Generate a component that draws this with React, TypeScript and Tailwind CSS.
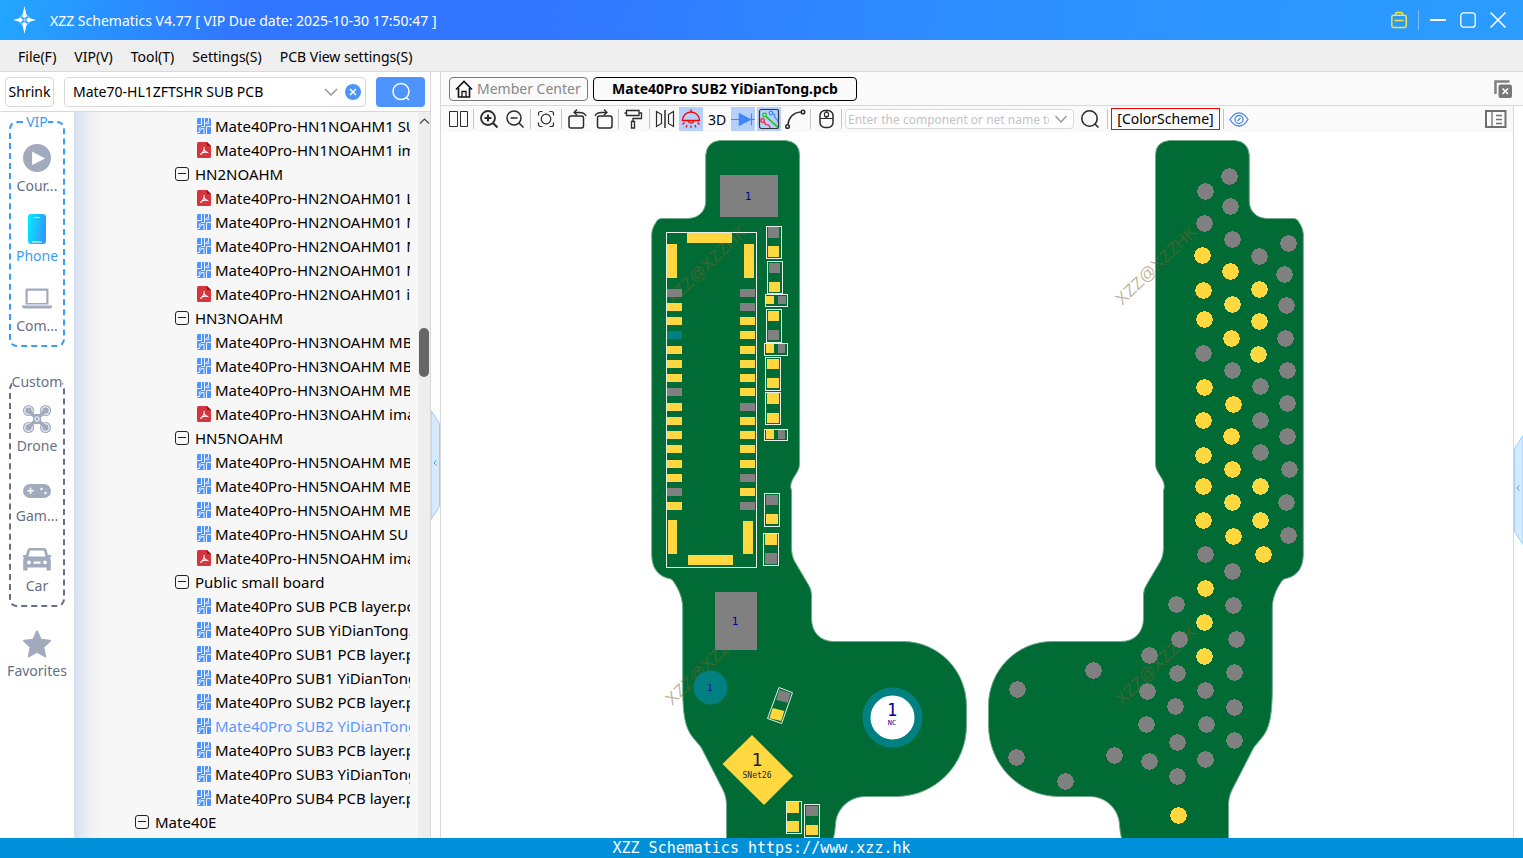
import { useState } from 'react';
import type { ReactNode } from 'react';

type NodeKind = 'pcb' | 'pdf' | 'folder' | 'root';
type TreeNode = { kind: NodeKind; name: string };

const tree: TreeNode[] = [
  { kind: 'pcb', name: 'Mate40Pro-HN1NOAHM1 SU' },
  { kind: 'pdf', name: 'Mate40Pro-HN1NOAHM1 im' },
  { kind: 'folder', name: 'HN2NOAHM' },
  { kind: 'pdf', name: 'Mate40Pro-HN2NOAHM01 L' },
  { kind: 'pcb', name: 'Mate40Pro-HN2NOAHM01 M' },
  { kind: 'pcb', name: 'Mate40Pro-HN2NOAHM01 M' },
  { kind: 'pcb', name: 'Mate40Pro-HN2NOAHM01 M' },
  { kind: 'pdf', name: 'Mate40Pro-HN2NOAHM01 i' },
  { kind: 'folder', name: 'HN3NOAHM' },
  { kind: 'pcb', name: 'Mate40Pro-HN3NOAHM MB' },
  { kind: 'pcb', name: 'Mate40Pro-HN3NOAHM MB' },
  { kind: 'pcb', name: 'Mate40Pro-HN3NOAHM MB' },
  { kind: 'pdf', name: 'Mate40Pro-HN3NOAHM ima' },
  { kind: 'folder', name: 'HN5NOAHM' },
  { kind: 'pcb', name: 'Mate40Pro-HN5NOAHM MB' },
  { kind: 'pcb', name: 'Mate40Pro-HN5NOAHM MB' },
  { kind: 'pcb', name: 'Mate40Pro-HN5NOAHM MB' },
  { kind: 'pcb', name: 'Mate40Pro-HN5NOAHM SU' },
  { kind: 'pdf', name: 'Mate40Pro-HN5NOAHM ima' },
  { kind: 'folder', name: 'Public small board' },
  { kind: 'pcb', name: 'Mate40Pro SUB PCB layer.pc' },
  { kind: 'pcb', name: 'Mate40Pro SUB YiDianTong.' },
  { kind: 'pcb', name: 'Mate40Pro SUB1 PCB layer.p' },
  { kind: 'pcb', name: 'Mate40Pro SUB1 YiDianTong' },
  { kind: 'pcb', name: 'Mate40Pro SUB2 PCB layer.p' },
  { kind: 'pcb', name: 'Mate40Pro SUB2 YiDianTong' },
  { kind: 'pcb', name: 'Mate40Pro SUB3 PCB layer.p' },
  { kind: 'pcb', name: 'Mate40Pro SUB3 YiDianTong' },
  { kind: 'pcb', name: 'Mate40Pro SUB4 PCB layer.p' },
  { kind: 'root', name: 'Mate40E' },
];

const indent: Record<NodeKind, string> = {
  pcb: 'pl-[123px] gap-1',
  pdf: 'pl-[123px] gap-1',
  folder: 'pl-[101px] gap-1.5',
  root: 'pl-[61px] gap-1.5',
};

function PcbFileIcon() {
  return (
    <svg width="14" height="16" viewBox="0 0 14 16" className="shrink-0">
      <rect width="14" height="16" rx="1.5" fill="#4d94ff" />
      <g fill="none" stroke="#fff" strokeWidth="0.9">
        <path d="M4.500 0v6.500H0M7.500 0v8.500h-3M7.500 5.500h1.800M11.500 0v3.200M14 8.500H9.500v7.500M7 16v-5.500H4.800M0 14.500h2.500v-1.500" />
        <circle cx="10.800" cy="4.800" r="1.200" />
        <circle cx="3.200" cy="11" r="1.200" />
      </g>
    </svg>
  );
}

function PdfFileIcon() {
  return (
    <svg width="14" height="16" viewBox="0 0 14 16" className="shrink-0">
      <path d="M1.500 0H10l4 4v10.500a1.500 1.500 0 0 1-1.500 1.500h-11A1.500 1.500 0 0 1 0 14.500v-13A1.500 1.500 0 0 1 1.500 0z" fill="#d3363f" />
      <path d="M10 0l4 4h-3a1 1 0 0 1-1-1z" fill="#8f1219" />
      <path d="M7 5.500c.6 2.500-1 4.800-3.300 7M7 7.500c.8 2 2 3 4 3.300M4.800 11c1.800-.9 3.500-1.100 5.500-.8" fill="none" stroke="#fff" strokeWidth="1.100" strokeLinecap="round" />
    </svg>
  );
}

function CollapseIcon() {
  return (
    <svg width="14" height="14" viewBox="0 0 14 14" fill="none" stroke="#222" strokeWidth="1" className="shrink-0">
      <rect x="0.500" y="0.500" width="13" height="13" rx="2.500" />
      <path d="M3 6.500h8" />
    </svg>
  );
}

function Category({ label, active, children }: { label: string; active?: boolean; children: ReactNode }) {
  return (
    <button
      type="button"
      className={
        active
          ? 'flex h-[70px] w-full flex-col items-center gap-1 whitespace-nowrap pt-3 text-[14px] leading-5 text-[#3b9cf2]'
          : 'flex h-[70px] w-full flex-col items-center gap-1 whitespace-nowrap pt-3 text-[14px] leading-5 text-[#667085]'
      }
    >
      <svg width="32" height="28" viewBox="-2 0 32 28" fill="#a2aabd" className="shrink-0 overflow-visible">
        {children}
      </svg>
      {label}
    </button>
  );
}

function Sidebar() {
  return (
    <nav className="flex w-[74px] shrink-0 flex-col items-center bg-white">
      <fieldset className="w-14 rounded-lg border-2 border-dashed border-[#3b9cf2] pb-[3px]">
        <legend className="mx-auto text-[14px] leading-5 text-[#3b9cf2]">VIP</legend>
        <div className="-mx-1">
          <Category label="Cour...">
            <circle cx="14" cy="14" r="14" />
            <path d="M9.500 8.200v12.300l11.800-6.100z" fill="#fff" stroke="#fff" strokeWidth="0.800" strokeLinejoin="round" />
          </Category>
          <Category label="Phone" active>
            <defs>
              <linearGradient id="phoneFill" x1="0" y1="0" x2="1" y2="0.300">
                <stop offset="0" stopColor="#00efff" />
                <stop offset="1" stopColor="#2f9bff" />
              </linearGradient>
            </defs>
            <rect x="5" y="0" width="18" height="30" rx="3" fill="url(#phoneFill)" />
            <path d="M12 3.500h4M9.500 28h9" stroke="#fff" strokeWidth="1.200" strokeLinecap="round" />
          </Category>
          <Category label="Com...">
            <path d="M3.500 4.500h21a1 1 0 0 1 1 1v15h-23v-15a1 1 0 0 1 1-1zM4.700 6.700v12.300h18.600V6.700z" fillRule="evenodd" />
            <path d="M-1 21.500h30v1a2 2 0 0 1-2 2H1a2 2 0 0 1-2-2z" />
          </Category>
        </div>
      </fieldset>
      <fieldset className="mt-[25px] w-14 rounded-lg border-2 border-dashed border-[#667085] pb-[3px]">
        <legend className="mx-auto text-[14px] leading-5 whitespace-nowrap text-[#667085]">Custom</legend>
        <div className="-mx-1">
          <Category label="Drone">
            <g fill="none" stroke="#a2aabd">
              <path d="M6 7l16 16M22 7L6 23" strokeWidth="3.500" />
              <circle cx="5.500" cy="6.500" r="4.900" strokeWidth="1.300" />
              <circle cx="22.500" cy="6.500" r="4.900" strokeWidth="1.300" />
              <circle cx="5.500" cy="23.500" r="4.900" strokeWidth="1.300" />
              <circle cx="22.500" cy="23.500" r="4.900" strokeWidth="1.300" />
            </g>
            <circle cx="5.500" cy="6.500" r="3.200" />
            <circle cx="22.500" cy="6.500" r="3.200" />
            <circle cx="5.500" cy="23.500" r="3.200" />
            <circle cx="22.500" cy="23.500" r="3.200" />
            <rect x="10" y="10" width="8" height="10" rx="2.500" />
            <circle cx="14" cy="15" r="2.200" fill="none" stroke="#fff" />
          </Category>
          <Category label="Gam...">
            <rect x="0" y="10" width="28" height="14" rx="7" />
            <path d="M7.500 13.500v6.500M4.300 16.750h6.400" stroke="#fff" strokeWidth="1.500" />
            <circle cx="18.500" cy="15" r="1.200" fill="#fff" />
            <circle cx="22.500" cy="19" r="1.200" fill="#fff" />
          </Category>
          <Category label="Car">
            <path
              transform="translate(0 1.500)"
              d="M7.500 2.500h13c1.800 0 2.700.8 3.200 2.300L25 9.500h3v2.300h-1.500c.9.900 1.300 1.800 1.300 3.200v10h-4.300v-3h-19v3H.2V15c0-1.400.4-2.300 1.300-3.200H0V9.500h3l1.300-4.700c.5-1.500 1.400-2.300 3.200-2.300zM8 5c-.7 0-1 .2-1.200.9L5.500 11h17l-1.300-5.100C21 5.200 20.700 5 20 5zM6 15a1.900 1.900 0 1 0 0 3.800 1.900 1.900 0 0 0 0-3.800zM22 15a1.900 1.900 0 1 0 0 3.800 1.900 1.900 0 0 0 0-3.800zM10.500 16v2.300h7V16z"
              fillRule="evenodd"
            />
          </Category>
        </div>
      </fieldset>
      <div className="mt-2.5 w-full">
        <Category label="Favorites">
          <path
            d="M14 2.500l3.800 8.300 9.200 1-6.700 6.300 1.900 9.400L14 22.700l-8.200 4.800 1.900-9.400L1 11.800l9.200-1z"
            stroke="#a2aabd"
            strokeWidth="2"
            strokeLinejoin="round"
          />
        </Category>
      </div>
    </nav>
  );
}

function FileTree() {
  const [selected, setSelected] = useState(25);
  return (
    <div className="flex min-w-0 flex-1 bg-[#f7f7f7] bg-[linear-gradient(to_right,#d6e0f1,#eef1f4_16px,#f7f7f7_32px)]">
      <ul className="mr-2 min-w-0 flex-1 overflow-hidden pt-0.5">
        {tree.map((node, index) => (
          <li key={index}>
            <button
              type="button"
              onClick={() => setSelected(index)}
              className={`flex h-6 w-full items-center overflow-hidden text-left text-[15px] leading-6 whitespace-nowrap ${indent[node.kind]} ${index === selected ? 'text-[#5b97ff]' : 'text-black'}`}
            >
              {node.kind === 'pcb' ? <PcbFileIcon /> : node.kind === 'pdf' ? <PdfFileIcon /> : <CollapseIcon />}
              <span className="min-w-0 overflow-hidden">{node.name}</span>
            </button>
          </li>
        ))}
      </ul>
      <div className="flex w-3 shrink-0 flex-col items-center bg-[#eeeeee]">
        <svg width="12" height="16" viewBox="0 0 12 16" fill="none" stroke="#444" strokeWidth="1.200">
          <path d="M2 11.500l4.500-4.500 4.500 4.500" />
        </svg>
        <div className="mt-[200px] h-[49px] w-2.5 rounded-full bg-[#666666]" />
      </div>
    </div>
  );
}

function SidePanel() {
  return (
    <section className="flex w-[431px] shrink-0 flex-col border-r border-[#d9d9d9] bg-white">
      <div className="flex h-10 shrink-0 items-center border-b border-[#d9d9d9] pl-[5px]">
        <button type="button" className="h-[30px] w-[49px] rounded border border-[#d9d9d9] bg-white text-[14px] text-black">
          Shrink
        </button>
        <div className="ml-2.5 flex h-[30px] w-[302px] items-center rounded border border-[#d9d9d9] bg-white">
          <input
            type="text"
            aria-label="Search boards"
            defaultValue="Mate70-HL1ZFTSHR SUB PCB"
            className="h-full min-w-0 flex-1 bg-transparent pl-2 text-[14px] text-black outline-none"
          />
          <button type="button" aria-label="Show history" className="flex w-6 justify-center">
            <svg width="14" height="8" viewBox="0 0 14 8" fill="none" stroke="#9a9a9a" strokeWidth="1.500">
              <path d="M1 1l6 6 6-6" />
            </svg>
          </button>
          <button type="button" aria-label="Clear" className="mr-0.5 flex w-5 justify-center">
            <svg width="16" height="16" viewBox="0 0 16 16">
              <circle cx="8" cy="8" r="8" fill="#4d94f5" />
              <path d="M5 5l6 6M11 5l-6 6" stroke="#fff" strokeWidth="1.500" />
            </svg>
          </button>
        </div>
        <button type="button" aria-label="Search" className="ml-2.5 flex h-[30px] w-[49px] items-center justify-center rounded bg-[#4d94ff]">
          <svg width="20" height="20" viewBox="0 0 20 20" fill="none" stroke="#fff" strokeWidth="1.500">
            <circle cx="10" cy="9.500" r="8" />
            <path d="M15.500 15.500l2.500 2.500" />
          </svg>
        </button>
      </div>
      <div className="flex min-h-0 flex-1">
        <Sidebar />
        <FileTree />
      </div>
    </section>
  );
}

function TitleBar() {
  return (
    <header className="flex h-10 shrink-0 items-center bg-[linear-gradient(100deg,#22a7ff_0%,#3176ff_16%,#3176ff_36%,#2e8dff_62%,#2a9dff_100%)] pl-3 pr-2.5">
      <svg width="26" height="32" viewBox="0 0 26 32" className="shrink-0">
        <circle cx="12.500" cy="16" r="5" fill="none" stroke="#7cc4ff" strokeWidth="1.500" />
        <path d="M12.500 2l2.300 10.500-2.300 2-2.300-2zM12.500 30l2.300-10.500-2.300-2-2.300 2zM1 16l8-2.300L11 16l-2 2.300zM24 16l-8-2.300L14 16l2 2.300z" fill="#fff" />
        <path d="M12.500 13v6M9.500 16h6" stroke="#9dd0ff" strokeWidth="1" />
      </svg>
      <h1 className="ml-3 flex-1 text-[14px] whitespace-nowrap text-white">XZZ Schematics V4.77 [ VIP Due date: 2025-10-30 17:50:47 ]</h1>
      <button type="button" aria-label="License" className="flex size-[30px] items-center justify-center">
        <svg width="16" height="18" viewBox="0 0 16 18" fill="none" stroke="#f2e53a" strokeWidth="1.500">
          <rect x="0.800" y="4.200" width="14.400" height="12.300" rx="2" />
          <path d="M4.500 4V3a1.500 1.500 0 0 1 1.500-1.500h4A1.500 1.500 0 0 1 11.500 3v1M3.500 9.500h9" />
        </svg>
      </button>
      <div className="mx-1 h-5 w-px bg-[#77bdff]" />
      <button type="button" aria-label="Minimize" className="flex size-[30px] items-center justify-center">
        <svg width="16" height="16" viewBox="0 0 16 16" stroke="#fff" strokeWidth="2">
          <path d="M0 8h16" />
        </svg>
      </button>
      <button type="button" aria-label="Maximize" className="flex size-[30px] items-center justify-center">
        <svg width="16" height="16" viewBox="0 0 16 16" fill="none" stroke="#fff" strokeWidth="1.300">
          <rect x="0.800" y="0.800" width="14.400" height="14.400" rx="3" />
        </svg>
      </button>
      <button type="button" aria-label="Close" className="flex size-[30px] items-center justify-center">
        <svg width="16" height="16" viewBox="0 0 16 16" stroke="#fff" strokeWidth="1.500">
          <path d="M0.500 0.500l15 15M15.500 0.500l-15 15" />
        </svg>
      </button>
    </header>
  );
}

const menus = ['File(F)', 'VIP(V)', 'Tool(T)', 'Settings(S)', 'PCB View settings(S)'];

function Tool({ label, active, children }: { label: string; active?: boolean; children: ReactNode }) {
  return (
    <button
      type="button"
      aria-label={label}
      className={active ? 'flex size-6 shrink-0 items-center justify-center bg-[#b5d0fb]' : 'flex size-6 shrink-0 items-center justify-center'}
    >
      <svg width="24" height="24" viewBox="0 0 24 24" fill="none" stroke="#2b2b2b" strokeWidth="1.500">
        {children}
      </svg>
    </button>
  );
}

function Separator() {
  return <div className="mx-px h-5 w-px shrink-0 bg-[#c4c4c4]" />;
}

function Toolbar() {
  return (
    <div className="flex h-[26px] shrink-0 items-center gap-0.5 bg-[#fafafa] pl-[5px] pr-1.5">
      <Tool label="Split view">
        <path d="M3.500 4.500h8v15h-8zM14.500 4.500h7v15h-7z" strokeWidth="1" />
      </Tool>
      <Separator />
      <Tool label="Zoom in">
        <circle cx="11" cy="11" r="7" strokeWidth="1.800" />
        <path d="M16 16l4.500 4.500M7.500 11h7M11 7.500v7" strokeWidth="2" />
      </Tool>
      <Tool label="Zoom out">
        <circle cx="11" cy="11" r="7" />
        <path d="M16 16l4.500 4.500M7.500 11h7" />
      </Tool>
      <Separator />
      <Tool label="Fit to window">
        <circle cx="12" cy="12" r="4.800" strokeWidth="1.200" />
        <path d="M4.500 8.500v-2a2 2 0 0 1 2-2h2M15.500 4.500h2a2 2 0 0 1 2 2v2M19.500 15.500v2a2 2 0 0 1-2 2h-2M8.500 19.500h-2a2 2 0 0 1-2-2v-2" strokeWidth="1.200" />
      </Tool>
      <Separator />
      <Tool label="Rotate left">
        <rect x="4" y="9" width="14.500" height="12" rx="2" />
        <path d="M9 5.500h5.500c3 0 5.500 1 6.500 3.500M12 2.500l-3 3 3 2.500" strokeWidth="1.300" />
      </Tool>
      <Tool label="Rotate right">
        <rect x="6.500" y="9" width="14.500" height="12" rx="2" />
        <path d="M16 5.500h-5.500c-3 0-5.500 1-6.500 3.500M13 2.500l3 3-3 2.500" strokeWidth="1.300" />
      </Tool>
      <Separator />
      <Tool label="Color painter">
        <path d="M4.500 3.500h12.500v5H4.500zM17 6h2.500v5.500h-8.500v3M4.500 6h-2M9.500 14.500h3v6.500h-3z" strokeWidth="1.300" />
      </Tool>
      <Separator />
      <Tool label="Mirror">
        <path d="M12 3v18" />
        <path d="M3.500 4.500l5 3v9l-5 3zM20.500 4.500l-5 3v9l5 3z" strokeWidth="1.200" />
      </Tool>
      <Tool label="Highlight" active>
        <g stroke="#f00" strokeWidth="1.400">
          <path d="M3.500 13.500a8.500 8.500 0 0 1 17 0zM12 5V2.500" />
          <path d="M9 14a3.200 3.200 0 0 0 6 0M5.500 15.500l-2 2M8 18l-1 2.500M12 18.500V21M16 18l1 2.500M18.500 15.500l2 2" strokeWidth="1.200" />
        </g>
      </Tool>
      <button type="button" className="w-6 shrink-0 text-center text-[14px] text-black">
        3D
      </button>
      <Tool label="Diode values" active>
        <g stroke="#4086ff">
          <path d="M0 12.500h24M20.500 6.500v12" strokeWidth="1.200" />
          <path d="M8.500 7v11l10.500-5.500z" fill="#4086ff" />
        </g>
      </Tool>
      <Tool label="Net lines" active>
        <g strokeWidth="1.200">
          <rect x="2.500" y="2.500" width="19" height="19" rx="2" stroke="#333" />
          <path d="M9 9.500l12 11" stroke="#18c018" strokeWidth="1.600" />
          <circle cx="7.500" cy="8" r="1.800" stroke="#18c018" />
          <circle cx="14" cy="6" r="1.800" stroke="#4086ff" />
          <path d="M15.800 6.500c3 0 1 3 2.500 4.500s2.500 1 2.500 4" stroke="#4086ff" />
          <circle cx="5.500" cy="13.500" r="1.800" stroke="#f02020" />
          <path d="M7 14.500l1.500 3 3 .5 2 3" stroke="#f02020" />
        </g>
      </Tool>
      <Tool label="Connections">
        <circle cx="20" cy="5" r="1.800" />
        <circle cx="4.500" cy="19.500" r="1.800" />
        <path d="M5 17.500C5.500 11 10 5.500 18 5" />
      </Tool>
      <Separator />
      <Tool label="Mouse mode">
        <rect x="6" y="3.500" width="13" height="17" rx="5" />
        <path d="M6 11.500h13M12.500 3.500V6M12.500 9v2" strokeWidth="1.200" />
        <rect x="10.500" y="5" width="4" height="5" rx="2" strokeWidth="1.200" />
      </Tool>
      <Separator />
      <div className="flex h-5 w-[229px] shrink-0 items-center rounded border border-[#d9d9d9] bg-white">
        <input
          type="text"
          aria-label="Component or net name"
          placeholder="Enter the component or net name to"
          className="h-full min-w-0 flex-1 bg-transparent pl-0.5 text-[12px] text-black outline-none placeholder:text-[#bfc3ca]"
        />
        <button type="button" aria-label="Show recent names" className="flex w-6 shrink-0 justify-center">
          <svg width="12" height="8" viewBox="0 0 12 8" fill="none" stroke="#999" strokeWidth="1.500">
            <path d="M0.500 1l5.500 6 5.500-6" />
          </svg>
        </button>
      </div>
      <button type="button" aria-label="Find" className="flex h-6 w-7 shrink-0 items-center justify-center">
        <svg width="20" height="20" viewBox="0 0 20 20" fill="none" stroke="#2b2b2b" strokeWidth="1.600">
          <circle cx="9.500" cy="9.500" r="7.700" />
          <path d="M15 15l3.500 3.500" />
        </svg>
      </button>
      <Separator />
      <button type="button" className="h-[22px] w-[109px] shrink-0 border border-[#f00] text-center text-[14px] leading-5 text-black">
        [ColorScheme]
      </button>
      <Separator />
      <Tool label="Visibility">
        <g stroke="#4a86e8" strokeWidth="1.300">
          <path d="M3 12.500C6 7.500 9 5.800 12 5.800s6 1.700 9 6.700c-3 5-6 6.500-9 6.500s-6-1.500-9-6.500z" />
          <circle cx="12" cy="12.500" r="4" />
          <path d="M10.500 14l3-3" />
        </g>
      </Tool>
      <div className="flex-1" />
      <Tool label="Side list">
        <g stroke="#6f6f6f">
          <path d="M3 4h19.500v16H3z" strokeWidth="2" />
          <path d="M9 4v16M13 8.500h6M13 12.500h6M13 16.500h6" strokeWidth="1.300" />
        </g>
      </Tool>
    </div>
  );
}

const GREEN = '#006b35';
const GOLD = '#ffd83f';
const GRAY = '#808080';
const TEAL = '#008080';

const boardOutline =
  'M720 140.500H785.500Q799.500 142 799.500 155V464C799.500 473 790.500 478 790.700 487L791.500 491V548C792 556 793 558 795 562L808 584Q811.500 589 811.500 595V618C811.500 632 820 641.500 834 641.500H903C938 641.500 966.500 670 966.500 706V725C966.500 765 935 796.500 896 796.500H866C848 796.500 836 810 835.500 825Q835 833 833 840H726.500V804C726 797 725 794 722 788L702 749C700 745 697 743 695 740C686 730 683 719 682.700 690V608C682.500 598 679 590 675 584C672 578 670 579 667 578C657 575 652 567 651.700 555V234C652 228 655 224 657.500 220Q659 218.500 662 218.500H688C699 218 705.700 211 705.700 201V155Q707 141.500 720 140.500Z';

type Pad = [x: number, y: number, w: number, h: number, fill: string];

const pinRows: [y: number, left: string, right: string][] = [
  [289, GRAY, GRAY],
  [303, GOLD, GRAY],
  [317, GOLD, GOLD],
  [331, TEAL, GOLD],
  [346, GOLD, GOLD],
  [360, GOLD, GOLD],
  [374, GOLD, GOLD],
  [388, GRAY, GOLD],
  [403, GOLD, GRAY],
  [417, GOLD, GOLD],
  [431, GOLD, GOLD],
  [445, GOLD, GOLD],
  [460, GOLD, GOLD],
  [474, GOLD, GRAY],
  [488, GRAY, GOLD],
  [502, GOLD, GRAY],
];

const pads: Pad[] = [
  [720, 175, 58, 42, GRAY],
  [715, 592, 42, 58, GRAY],
  [687, 233, 45, 10, GOLD],
  [667, 244, 10, 34, GOLD],
  [744, 244, 10, 34, GOLD],
  [668, 520, 9, 34, GOLD],
  [743, 521, 10, 33, GOLD],
  [688, 555, 45, 10, GOLD],
  [768, 227, 11, 11, GRAY],
  [768, 246, 11, 11, GOLD],
  [769, 263, 11, 10, GRAY],
  [769, 282, 11, 10, GOLD],
  [766, 296, 8, 8, GOLD],
  [778, 296, 8, 8, GRAY],
  [768, 311, 11, 10, GOLD],
  [768, 330, 11, 10, GRAY],
  [766, 344, 8, 9, GOLD],
  [778, 344, 7, 9, GRAY],
  [767, 359, 12, 10, GOLD],
  [767, 378, 12, 10, GOLD],
  [767, 393, 12, 11, GOLD],
  [767, 413, 12, 10, GOLD],
  [766, 430, 8, 9, GOLD],
  [778, 430, 7, 9, GRAY],
  [766, 495, 12, 10, GRAY],
  [766, 514, 12, 10, GOLD],
  [765, 534, 12, 11, GOLD],
  [765, 553, 12, 11, GRAY],
  [787, 802, 12, 11, GOLD],
  [787, 821, 12, 11, GOLD],
  [806, 806, 12, 10, GRAY],
  [806, 825, 12, 10, GOLD],
];

const outlines: [x: number, y: number, w: number, h: number][] = [
  [666, 232, 90, 335],
  [766, 226, 15, 32],
  [767, 261, 15, 32],
  [765, 294, 22, 12],
  [766, 309, 15, 33],
  [764, 343, 23, 12],
  [765, 357, 15, 33],
  [765, 392, 15, 32],
  [764, 429, 23, 11],
  [764, 493, 15, 33],
  [763, 533, 15, 32],
  [786, 801, 15, 32],
  [804, 804, 15, 33],
];

const grayDots: [number, number][] = [
  [1229, 176], [1205, 191], [1230, 206], [1204, 223], [1232, 239], [1288, 243], [1259, 256], [1284, 274],
  [1286, 305], [1285, 338], [1203, 353], [1232, 370], [1287, 370], [1260, 386], [1287, 403], [1260, 420],
  [1287, 436], [1260, 452], [1289, 469], [1286, 502], [1288, 535], [1205, 554], [1232, 571], [1176, 604],
  [1233, 605], [1179, 639], [1236, 639], [1149, 655], [1093, 670], [1017, 689], [1177, 673], [1234, 672],
  [1147, 691], [1205, 690], [1175, 706], [1234, 707], [1146, 724], [1206, 724], [1177, 742], [1234, 740],
  [1016, 757], [1114, 755], [1149, 761], [1205, 759], [1177, 776], [1065, 781],
];

const goldDots: [number, number][] = [
  [1202, 255], [1230, 271], [1203, 290], [1259, 289], [1232, 304], [1204, 319], [1259, 321], [1231, 338],
  [1258, 354], [1204, 387], [1233, 404], [1203, 420], [1231, 436], [1203, 455], [1232, 469], [1203, 486],
  [1260, 486], [1232, 502], [1203, 520], [1260, 520], [1233, 536], [1263, 554], [1205, 588], [1204, 622],
  [1204, 656], [1178, 815],
];

const watermarks: [number, number][] = [
  [672, 306],
  [1122, 306],
  [672, 706],
  [1122, 706],
];

function BoardView() {
  return (
    <svg
      viewBox="441 132 1072 706"
      preserveAspectRatio="xMidYMid slice"
      className="h-full w-full bg-white font-['DejaVu_Sans_Mono',monospace]"
      role="img"
      aria-label="Board layout"
    >
      <g fill={GREEN} stroke="#6fa98a" strokeWidth="1">
        <path d={boardOutline} />
        <path d={boardOutline} transform="translate(1955 0) scale(-1 1)" />
      </g>
      <g fill="#80602a" fillOpacity="0.480" fontFamily="Liberation Sans" fontSize="17">
        {watermarks.map(([x, y]) => (
          <text key={`${x}-${y}`} transform={`translate(${x} ${y}) rotate(-44)`}>
            XZZ@XZZHK
          </text>
        ))}
      </g>
      <g shapeRendering="crispEdges">
        {pinRows.map(([y, left, right]) => (
          <g key={y}>
            <rect x="667" y={y} width="15" height="8" fill={left} />
            <rect x="740" y={y} width="15" height="8" fill={right} />
          </g>
        ))}
        {pads.map(([x, y, w, h, fill]) => (
          <rect key={`${x}-${y}`} x={x} y={y} width={w} height={h} fill={fill} />
        ))}
      </g>
      <g fill="none" stroke="#e6efe9" transform="translate(0.5 0.5)">
        {outlines.map(([x, y, w, h]) => (
          <rect key={`${x}-${y}`} x={x} y={y} width={w} height={h} />
        ))}
      </g>
      <path d="M779.300 690l11.400 3.300-3 9.400-11.400-2.700z" fill={GRAY} />
      <path d="M772.700 708l11.600 3-3 10-12-2.700z" fill={GOLD} />
      <path d="M779 687.500l13.500 5.200-10.800 30.800-14.200-5z" fill="none" stroke="#e6efe9" />
      <circle cx="710.500" cy="687.500" r="17" fill={TEAL} />
      <circle cx="892.500" cy="717.500" r="26" fill="#fff" stroke={TEAL} strokeWidth="8" />
      <path d="M752 735l41 41-29 29-41.500-41z" fill={GOLD} />
      <g transform="translate(0.5 0.5)" shapeRendering="crispEdges">
        <g fill={GRAY}>
          {grayDots.map(([x, y]) => (
            <circle key={`${x}-${y}`} cx={x} cy={y} r="8.300" />
          ))}
        </g>
        <g fill={GOLD}>
          {goldDots.map(([x, y]) => (
            <circle key={`${x}-${y}`} cx={x} cy={y} r="8.300" />
          ))}
        </g>
      </g>
      <g fill="#00009c" textAnchor="middle">
        <text x="748" y="200" fontSize="11">1</text>
        <text x="735" y="625" fontSize="11">1</text>
        <text x="710" y="691" fontSize="8">1</text>
        <text x="892" y="716" fontSize="17">1</text>
        <text x="892" y="725" fontSize="7">NC</text>
        <text x="757" y="766" fontSize="18" fill="#1a1a4d">1</text>
        <text x="757" y="778" fontSize="8" fill="#1a1a4d">SNet26</text>
      </g>
    </svg>
  );
}

function Handle({ side }: { side: 'left' | 'right' }) {
  return (
    <button type="button" aria-label={side === 'left' ? 'Collapse file panel' : 'Expand side list'} className="block w-full">
      <svg viewBox="0 0 9 110" className="block w-full">
        {side === 'left' ? (
          <path d="M0 0.500l8.500 13v83L0 109.500z" fill="#d6eaff" stroke="#9ccdfa" />
        ) : (
          <path d="M9 0.500l-8.500 13v83l8.500 13z" fill="#d6eaff" stroke="#9ccdfa" />
        )}
        <path d="M5.500 50.500L3 53l2.500 2.500" fill="none" stroke="#3b9cf2" />
      </svg>
    </button>
  );
}

function Workspace() {
  return (
    <main className="flex min-w-0 flex-1 flex-col border-l border-[#d9d9d9] bg-[#fafafa]">
      <div className="flex h-[34px] shrink-0 items-center border-b border-[#d9d9d9] pl-2 pr-2.5">
        <button type="button" className="flex h-6 w-[139px] items-center gap-1 rounded border border-[#7a7a7a] pl-[5px] text-[14px] whitespace-nowrap text-[#888888]">
          <svg width="18" height="18" viewBox="0 0 18 18" fill="none" stroke="#111" strokeWidth="1.600" className="shrink-0">
            <path d="M1 9.500L9 1.500l8 8M3.500 8v9h11V8" />
            <path d="M7 17v-5.500h4V17" strokeWidth="1.300" />
          </svg>
          Member Center
        </button>
        <button type="button" className="ml-[5px] h-6 w-[264px] rounded border border-black text-center text-[14px] font-bold whitespace-nowrap text-black">
          Mate40Pro SUB2 YiDianTong.pcb
        </button>
        <div className="flex-1" />
        <button type="button" aria-label="Close all tabs">
          <svg width="20" height="20" viewBox="0 0 20 20">
            <path d="M2.500 15V2.500h14" fill="none" stroke="#808080" strokeWidth="2.500" />
            <rect x="5.500" y="5.500" width="13.500" height="13.500" rx="2" fill="#777" />
            <path d="M9.500 9.500l5.500 5.500M15 9.500l-5.500 5.500" stroke="#fff" strokeWidth="1.600" />
          </svg>
        </button>
      </div>
      <div className="flex min-h-0 flex-1">
        <div className="flex min-w-0 flex-1 flex-col">
          <Toolbar />
          <div className="min-h-0 flex-1 overflow-hidden">
            <BoardView />
          </div>
        </div>
        <div className="flex w-2.5 shrink-0 flex-col justify-center border-l border-[#d9d9d9] bg-white">
          <div className="mt-9">
            <Handle side="right" />
          </div>
        </div>
      </div>
    </main>
  );
}

export default function App() {
  return (
    <div className="flex h-screen flex-col overflow-hidden bg-white font-['Noto_Sans',sans-serif]">
      <TitleBar />
      <nav className="flex h-8 shrink-0 items-center gap-[18px] border-b border-[#d9d9d9] bg-[#efefef] pt-0.5 pl-[18px] text-[14px] text-black">
        {menus.map((menu) => (
          <button key={menu} type="button" className="whitespace-nowrap">
            {menu}
          </button>
        ))}
      </nav>
      <div className="flex min-h-0 flex-1">
        <SidePanel />
        <div className="flex w-[9px] shrink-0 flex-col justify-center bg-[#fbfefb]">
          <div className="mt-5">
            <Handle side="left" />
          </div>
        </div>
        <Workspace />
      </div>
      <footer className="h-5 shrink-0 bg-[#0090da] text-center font-['DejaVu_Sans_Mono',monospace] text-[15px] leading-5 whitespace-pre text-white">
        XZZ Schematics https://www.xzz.hk
      </footer>
    </div>
  );
}
